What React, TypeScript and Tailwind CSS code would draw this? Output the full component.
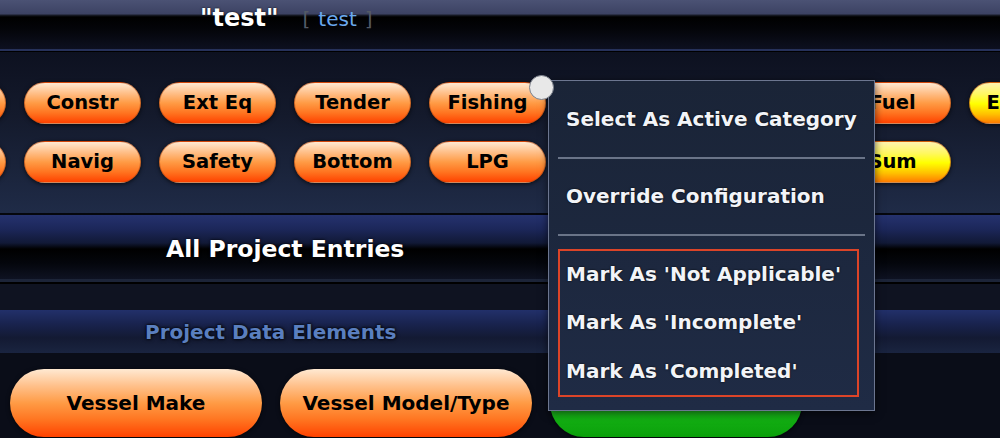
const font = { fontFamily: '"DejaVu Sans", Verdana, sans-serif' };

const orange =
  'bg-[linear-gradient(to_bottom,#ffe9d2_0%,#ffc08a_25%,#ff9b45_50%,#ff7420_75%,#ff4200_100%)]';
const yellow =
  'bg-[linear-gradient(to_bottom,#fff3b0_0%,#fff860_28%,#ffff00_52%,#ffc000_78%,#ff7c00_100%)]';

const rowOne = [
  { label: 'Hull', tone: orange },
  { label: 'Constr', tone: orange },
  { label: 'Ext Eq', tone: orange },
  { label: 'Tender', tone: orange },
  { label: 'Fishing', tone: orange },
  { label: 'Engine', tone: orange },
  { label: 'Equip', tone: orange },
  { label: 'Fuel', tone: orange },
  { label: 'Electric', tone: yellow },
];

const rowTwo = [
  { label: 'Rigging', tone: orange },
  { label: 'Navig', tone: orange },
  { label: 'Safety', tone: orange },
  { label: 'Bottom', tone: orange },
  { label: 'LPG', tone: orange },
  { label: 'Water', tone: orange },
  { label: 'Misc', tone: orange },
  { label: 'Sum', tone: yellow },
];

function Pill({ label, tone }: { label: string; tone: string }) {
  return (
    <div
      className={`${tone} w-[117px] h-[42px] shrink-0 rounded-full flex items-center justify-center text-[19.5px] font-bold text-black whitespace-nowrap shadow-[0_1px_4px_rgba(0,0,0,0.7)] border border-[#b24a10]/60`}
    >
      {label}
    </div>
  );
}

function MenuItem({ children, h }: { children: string; h: string }) {
  return (
    <div
      className={`${h} flex items-center text-[20px] font-bold text-[#f2f4f8] whitespace-nowrap [text-shadow:0_0_2px_#000]`}
    >
      {children}
    </div>
  );
}

export default function App() {
  return (
    <div className="relative w-[1000px] h-[438px] overflow-hidden bg-[#0a0d18]" style={font}>
      {/* header */}
      <div className="h-[49px] bg-[linear-gradient(to_bottom,#4b5274_0px,#3c4263_14px,#1b1e2b_15px,#000_17px,#04050a_30px,#0d1020_49px)]">
        <div className="flex items-baseline pl-[200px]">
          <span className="text-[24px] font-bold text-white [text-shadow:0_0_2px_#000]">"test"</span>
          <span className="ml-[24px] text-[20px] text-[#545a66]">[</span>
          <span className="ml-[8px] text-[20px] text-[#6aa9ee]">test</span>
          <span className="ml-[8px] text-[20px] text-[#545a66]">]</span>
        </div>
      </div>
      <div className="h-[2px] bg-[#26315a]" />
      <div className="h-px bg-black" />

      {/* categories */}
      <div className="h-[161px] pt-[30px] flex flex-col gap-[17px] bg-[linear-gradient(to_bottom,#0d1120_0%,#141a2c_40%,#1f2b47_100%)]">
        <div className="flex gap-[18px] ml-[-111px]">
          {rowOne.map((p) => (
            <Pill key={p.label} {...p} />
          ))}
        </div>
        <div className="flex gap-[18px] ml-[-111px]">
          {rowTwo.map((p) => (
            <Pill key={p.label} {...p} />
          ))}
        </div>
      </div>

      {/* all project entries */}
      <div className="h-[2px] bg-[#05070d]" />
      <div className="relative h-[64px] bg-[linear-gradient(to_bottom,#25326e_0px,#1c275a_14px,#111936_28px,#000_34px,#04060c_48px,#0e1222_64px)]">
        <div className="absolute left-[166px] top-[17px] text-[23.5px] font-bold text-white whitespace-nowrap [text-shadow:0_0_3px_#000]">
          All Project Entries
        </div>
      </div>
      <div className="h-[3px] bg-[#1c2438]" />
      <div className="h-[2px] bg-black" />
      <div className="h-[26px] bg-[#0f1321]" />

      {/* project data elements */}
      <div className="h-[43px] flex items-center pl-[145px] bg-[linear-gradient(to_bottom,#22306a_0%,#18224c_35%,#131a33_65%,#1a2440_100%)]">
        <span className="text-[20px] font-bold text-[#5a7fbf] [text-shadow:0_0_4px_#000,0_0_2px_#000]">
          Project Data Elements
        </span>
      </div>

      <div className="flex gap-[18px] pl-[10px] pt-[16px]">
        <div
          className={`${orange} w-[252px] h-[68px] shrink-0 rounded-full flex items-center justify-center text-[20px] font-bold text-black shadow-[0_1px_4px_rgba(0,0,0,0.7)]`}
        >
          Vessel Make
        </div>
        <div
          className={`${orange} w-[252px] h-[68px] shrink-0 rounded-full flex items-center justify-center text-[20px] font-bold text-black shadow-[0_1px_4px_rgba(0,0,0,0.7)]`}
        >
          Vessel Model/Type
        </div>
        <div className="w-[252px] h-[68px] shrink-0 rounded-full flex items-center justify-center text-[20px] font-bold text-black bg-[linear-gradient(to_bottom,#b8f0b0_0%,#3ccc3c_40%,#14b014_70%,#0aa00a_100%)] shadow-[0_1px_4px_rgba(0,0,0,0.7)]">
          Vessel Year
        </div>
      </div>

      {/* context menu */}
      <div className="absolute left-[548px] top-[80px] w-[327px] h-[331px] border border-[#6c7690] bg-[linear-gradient(to_bottom,#1a2437_0%,#1f2b45_100%)] shadow-[0_2px_8px_rgba(0,0,0,0.6)] px-[9px]">
        <div className="pl-[8px]">
          <MenuItem h="h-[76px]">Select As Active Category</MenuItem>
        </div>
        <div className="h-[2px] bg-[#6a7488]" />
        <div className="pl-[8px]">
          <MenuItem h="h-[75px] pb-[2px]">Override Configuration</MenuItem>
        </div>
        <div className="h-[2px] bg-[#6a7488]" />
        <div className="mt-[13px] w-[301px] border-2 border-[#dc4428] pl-[6px]">
          <MenuItem h="h-[46px]">Mark As 'Not Applicable'</MenuItem>
          <MenuItem h="h-[50px]">Mark As 'Incomplete'</MenuItem>
          <MenuItem h="h-[48px]">Mark As 'Completed'</MenuItem>
        </div>
      </div>
      <div className="absolute left-[529px] top-[75px] w-[25px] h-[25px] rounded-full bg-[#e8e8e8] border border-[#7a7f8a]" />
    </div>
  );
}
